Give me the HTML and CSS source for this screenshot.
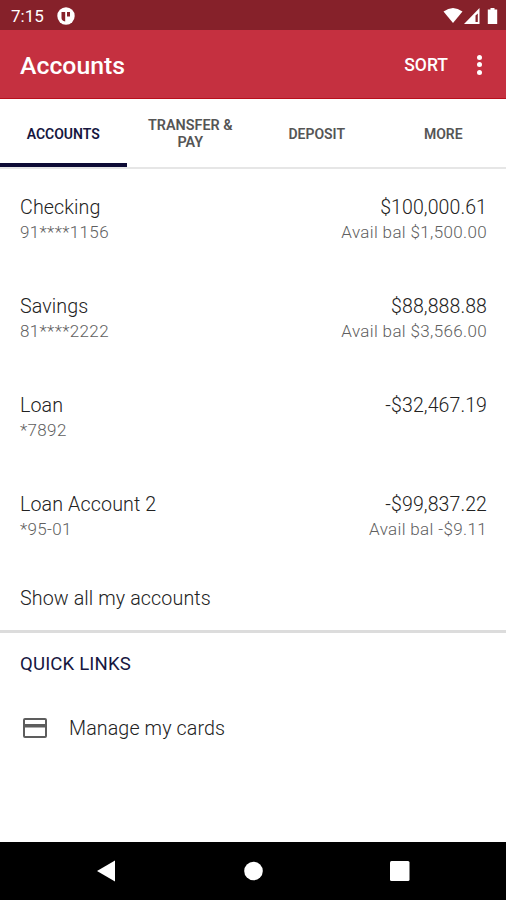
FILE: index.html
```html
<!DOCTYPE html>
<html lang="en">
<head>
<meta charset="utf-8">
<title>Accounts</title>
<link rel="stylesheet" href="styles.css">
</head>
<body>
<div class="phone">
  <div class="status">
    <span class="time">7:15</span>
    <svg class="app-dot" width="18" height="18" viewBox="0 0 18 18"><circle cx="9" cy="9" r="8.7" fill="#fff"/><path d="M4.500 5h3.700v9.500Q4.500 13.500 4.500 11zM10 5h3v4.500h-3z" fill="#86212a"/></svg>
    <svg class="signals" width="58" height="18" viewBox="0 0 58 18" fill="#fff"><path d="M1.500 4.500Q11-2.500 20.500 4.500L11 16z"/><path fill-rule="evenodd" d="M37.500 1v16H22zM35.800 6.500v8.500h-2.300V8.500z"/><path d="M45.800 2.500h2.700V1h4v1.500h2.700V17h-9.400z"/></svg>
  </div>
  <header class="bar">
    <h1>Accounts</h1>
    <span class="sort">SORT</span>
    <span class="dots"><i></i><i></i><i></i></span>
  </header>
  <nav class="tabs">
    <span class="tab active">ACCOUNTS</span>
    <span class="tab wide">TRANSFER &amp;<br>PAY</span>
    <span class="tab">DEPOSIT</span>
    <span class="tab">MORE</span>
  </nav>
  <main>
    <section class="accounts">
      <div class="account"><div><p class="main">Checking</p><p class="sub">91****1156</p></div><div class="right"><p class="main">$100,000.61</p><p class="sub">Avail bal $1,500.00</p></div></div>
      <div class="account"><div><p class="main">Savings</p><p class="sub">81****2222</p></div><div class="right"><p class="main">$88,888.88</p><p class="sub">Avail bal $3,566.00</p></div></div>
      <div class="account"><div><p class="main">Loan</p><p class="sub">*7892</p></div><div class="right"><p class="main">-$32,467.19</p></div></div>
      <div class="account"><div><p class="main">Loan Account 2</p><p class="sub">*95-01</p></div><div class="right"><p class="main">-$99,837.22</p><p class="sub">Avail bal -$9.11</p></div></div>
      <p class="main show-all">Show all my accounts</p>
    </section>
    <section class="links">
      <h2>QUICK LINKS</h2>
      <div class="link">
        <svg width="26" height="22" viewBox="0 0 26 22"><path fill="#5d5d5d" fill-rule="evenodd" d="M3 0h20a2 2 0 0 1 2 2v16a2 2 0 0 1-2 2H3a2 2 0 0 1-2-2V2a2 2 0 0 1 2-2zM3 2V6h20V2zM3 9.500v8.500h20V9.500z"/></svg>
        <span class="main">Manage my cards</span>
      </div>
    </section>
  </main>
  <footer class="navbar">
    <svg width="20" height="22" viewBox="0 0 20 22"><path d="M19 .5v21L1 11z" fill="#fff"/></svg>
    <svg width="20" height="20" viewBox="0 0 20 20"><circle cx="10.500" cy="10" r="9.300" fill="#fff"/></svg>
    <svg width="20" height="20" viewBox="0 0 20 20"><rect width="19.500" height="20" rx="1.500" fill="#fff"/></svg>
  </footer>
</div>
</body>
</html>
```
FILE: styles.css
```css
* { box-sizing: border-box; }
body, h1, h2, p { margin: 0; }
body { font-family: Roboto, "Liberation Sans", sans-serif; background: #fff; }
svg { display: block; }
.phone { display: flex; flex-direction: column; width: 506px; height: 900px; overflow: hidden; }
.status { display: flex; align-items: center; height: 30px; padding: 1px 6px 0 11px; background: #86212a; color: #fff; }
.time { width: 46px; font-size: 17px; }
.signals { margin-left: auto; }
.bar { display: flex; align-items: center; height: 69px; padding: 1px 24px 0 20px; background: #c53040; border-bottom: 1px solid #b80f1c; color: #fff; }
h1 { flex: 1; padding-top: 2px; font-size: 24.800px; font-weight: 500; }
.sort { font-size: 17.500px; font-weight: 500; }
.dots { display: grid; gap: 2.500px; margin-left: 29px; }
.dots i { width: 5px; height: 5px; border-radius: 50%; background: #fff; }
.tabs { display: grid; grid-template-columns: repeat(4, 1fr); height: 70px; border-bottom: 2px solid #e6e6e6; }
.tab { display: flex; align-items: center; justify-content: center; padding: 2px 0 0 1px; text-align: center; font-size: 14px; line-height: 17px; font-weight: 600; color: #555; }
.tab.wide { font-size: 14.400px; }
.tab.active { padding-left: 0; color: #17173f; box-shadow: inset 0 -4px #0d0b35; }
main { flex: 1; }
.accounts { height: 464px; padding: 26px 19px 0 20px; border-bottom: 3px solid #dcdcdc; }
.account { display: flex; justify-content: space-between; height: 99px; }
.right { text-align: right; }
.main { font-size: 19.700px; line-height: 25px; font-weight: 360; color: #222; letter-spacing: .1px; }
.right .main { font-size: 19.500px; letter-spacing: .1px; }
.sub { font-size: 17px; line-height: 24px; font-weight: 360; color: #606060; letter-spacing: .35px; }
.show-all { margin-top: -5px; }
.links { padding: 18px 20px; }
h2 { font-size: 18.600px; line-height: 26px; font-weight: 400; letter-spacing: .15px; color: #17173f; }
.link { display: flex; align-items: center; gap: 21px; margin-top: 39px; padding-left: 2px; }
.navbar { display: flex; align-items: center; gap: 127px; height: 58px; padding-left: 96px; background: #000; }
```
